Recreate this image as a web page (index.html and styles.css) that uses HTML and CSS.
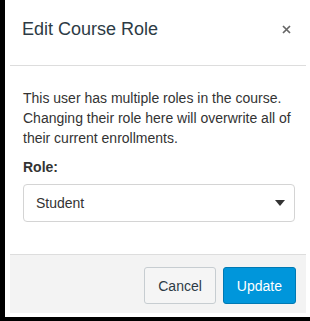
FILE: index.html
```html
<!DOCTYPE html>
<html lang="en">
<head>
    <meta charset="UTF-8">
    <title>Edit Course Role</title>
    <link rel="stylesheet" href="styles.css">
</head>
<body>

<div class="window">
    <div class="dialog">
        <div class="dialog-header">
            <div class="title">Edit Course Role</div>
            <button class="close" aria-label="Close">
                <svg width="9" height="9" viewBox="0 0 9 9">
                    <path d="M1 1 L8 8 M8 1 L1 8" stroke="#666" stroke-width="1.7"/>
                </svg>
            </button>
        </div>
        <div class="dialog-body">
            <p class="text">
                This user has multiple roles in the course.
                Changing their role here will overwrite all of
                their current enrollments.
            </p>
            <label class="label" for="role">Role:</label>
            <div class="select">
                <span>Student</span>
                <svg width="10" height="6" viewBox="0 0 10 6">
                    <path d="M0 0 L10 0 L5 6 Z" fill="#333"/>
                </svg>
            </div>
        </div>
        <div class="dialog-footer">
            <button class="button">Cancel</button>
            <button class="button primary">Update</button>
        </div>
    </div>
</div>

</body>
</html>
```

FILE: styles.css
```css
* {
    font-family: "Liberation Sans", Helvetica, Arial, sans-serif;
    box-sizing: border-box;
}

body {
    margin: 0;
    background: #000;
    height: 321px;
    overflow: hidden;
}

.window {
    margin-left: 5px;
    height: 317px;
    background: #fff;
    padding: 0 4px 4px 5px;
}

.dialog {
    display: flex;
    flex-direction: column;
    height: 100%;
}

.dialog-header {
    height: 66px;
    border-bottom: 1px solid #ddd;
    display: flex;
    align-items: center;
    justify-content: space-between;
    padding: 0 15px 0 12px;
}

.title {
    font-size: 18px;
    color: #2d3b45;
    margin-top: -6px;
}

.close {
    background: none;
    border: none;
    padding: 0;
    margin-top: -6px;
    display: flex;
}

.dialog-body {
    flex: 1;
    padding: 22px 11px 0 13px;
}

.text {
    margin: 0;
    font-size: 14px;
    line-height: 20px;
    color: #333;
}

.label {
    display: block;
    margin-top: 9px;
    font-size: 14px;
    line-height: 20px;
    font-weight: bold;
    color: #333;
}

.select {
    margin-top: 7px;
    height: 38px;
    border: 1px solid #d4d4d4;
    border-radius: 4px;
    display: flex;
    align-items: center;
    justify-content: space-between;
    padding: 0 9px 0 12px;
    font-size: 14px;
    color: #333;
}

.dialog-footer {
    height: 59px;
    background: #f3f3f3;
    border-top: 1px solid #ddd;
    display: flex;
    justify-content: flex-end;
    align-items: flex-start;
    gap: 7px;
    padding: 12px 10px 0 0;
}

.button {
    height: 37px;
    padding: 0 13px;
    font-size: 14px;
    border-radius: 3px;
    border: 1px solid #c7cdd1;
    background: #f5f5f5;
    color: #2d3b45;
}

.button.primary {
    background: #0096db;
    border-color: #0079b3;
    color: #fff;
}
```
